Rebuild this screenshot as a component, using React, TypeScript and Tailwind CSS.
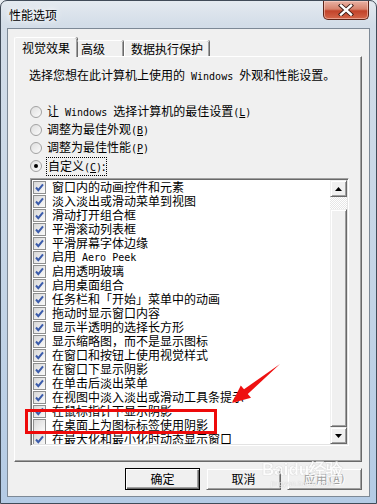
import React from 'react';
import clsx from 'clsx';

const effects: { label: string; checked: boolean }[] = [
  { label: '窗口内的动画控件和元素', checked: true },
  { label: '淡入淡出或滑动菜单到视图', checked: true },
  { label: '滑动打开组合框', checked: true },
  { label: '平滑滚动列表框', checked: true },
  { label: '平滑屏幕字体边缘', checked: true },
  { label: '启用 Aero Peek', checked: true },
  { label: '启用透明玻璃', checked: true },
  { label: '启用桌面组合', checked: true },
  { label: '任务栏和「开始」菜单中的动画', checked: true },
  { label: '拖动时显示窗口内容', checked: true },
  { label: '显示半透明的选择长方形', checked: true },
  { label: '显示缩略图，而不是显示图标', checked: true },
  { label: '在窗口和按钮上使用视觉样式', checked: true },
  { label: '在窗口下显示阴影', checked: true },
  { label: '在单击后淡出菜单', checked: true },
  { label: '在视图中淡入淡出或滑动工具条提示', checked: true },
  { label: '在鼠标指针下显示阴影', checked: true },
  { label: '在桌面上为图标标签使用阴影', checked: false },
  { label: '在最大化和最小化时动态显示窗口', checked: true },
];

const radios = [
  { label: '让 Windows 选择计算机的最佳设置', key: 'L' },
  { label: '调整为最佳外观', key: 'B' },
  { label: '调整为最佳性能', key: 'P' },
];

// latin runs are half-width in the original (SimSun), so put them in a mono font
function Mixed({ text }: { text: string }) {
  const parts = text.split(/( ?[A-Za-z]+(?: [A-Za-z]+)* ?)/);
  return (
    <>
      {parts.map((p, i) =>
        i % 2 === 1 ? (
          <span key={i} className="font-['DejaVu_Sans_Mono'] text-[10px] whitespace-pre">
            {p}
          </span>
        ) : (
          <span key={i}>{p}</span>
        )
      )}
    </>
  );
}

function Shortcut({ k }: { k: string }) {
  return (
    <span className="font-['DejaVu_Sans_Mono'] text-[10px]">
      (<span className="underline">{k}</span>)
    </span>
  );
}

function CheckBox({ checked }: { checked: boolean }) {
  return (
    <span className="w-[13px] h-[13px] shrink-0 border border-[#8e8f8f] bg-[linear-gradient(135deg,#d8d8d8,#fafafa)] flex items-center justify-center">
      {checked && (
        <svg width="11" height="11" viewBox="0 0 11 11">
          <path d="M2 5.5 L4.3 8.2 L9 2.3" fill="none" stroke="#3b5cab" strokeWidth="2" />
        </svg>
      )}
    </span>
  );
}

function Radio({ selected }: { selected?: boolean }) {
  return (
    <span className="w-[12px] h-[12px] shrink-0 rounded-full border border-[#a2a2a2] bg-[linear-gradient(135deg,#dedede,#fbfbfb)] flex items-center justify-center">
      {selected && <span className="w-[4px] h-[4px] rounded-full bg-black" />}
    </span>
  );
}

function Arrow({ up }: { up?: boolean }) {
  return (
    <svg width="7" height="4" viewBox="0 0 7 4">
      <path d={up ? 'M0 4 L3.5 0 L7 4 Z' : 'M0 0 L7 0 L3.5 4 Z'} fill="#000" />
    </svg>
  );
}

const raised =
  'border border-t-[#f0f0f0] border-l-[#f0f0f0] border-r-[#696969] border-b-[#696969] shadow-[inset_1px_1px_0_#fff,inset_-1px_-1px_0_#a0a0a0] bg-[#f0f0f0]';

export default function App() {
  return (
    <div className="w-[377px] h-[504px] relative overflow-hidden font-['Noto_Sans_CJK_SC',sans-serif] text-black bg-[#e8edf2]">
      {/* Aero frame */}
      <div className="w-full h-full flex flex-col rounded-t-[7px] border border-[#404b58] bg-[linear-gradient(180deg,#e4eaf0_0px,#d3dde8_24px,#c3d4e6_60%,#b4cbe5_100%)]">
        {/* Title bar */}
        <div className="h-[27px] flex items-start justify-between shrink-0">
          <span className="pl-[8px] pt-[6px] text-[12px] leading-[16px] [text-shadow:0_0_5px_#fff,0_0_8px_#fff]">
            性能选项
          </span>
          <div className="mr-[7px] w-[46px] h-[19px] rounded-b-[5px] border border-t-0 border-[#5e2519] bg-[linear-gradient(180deg,#e9b2a4_0%,#d7826c_45%,#c2432a_55%,#d4664a_100%)] shadow-[inset_0_0_0_1px_rgba(255,220,210,0.5)] flex items-center justify-center">
            <svg width="16" height="12" viewBox="0 0 16 12">
              <path d="M3 1.5 L13 10.5 M13 1.5 L3 10.5" stroke="#3a1a14" strokeWidth="4.2" strokeLinecap="square" />
              <path d="M3 1.5 L13 10.5 M13 1.5 L3 10.5" stroke="#fff" strokeWidth="2.4" strokeLinecap="square" />
            </svg>
          </div>
        </div>

        {/* Client area */}
        <div className="mx-[6px] h-[469px] shrink-0 border border-[#7d8996] bg-[#f0f0f0] flex flex-col pt-[8px] pl-[6px] pr-[7px] text-[12px] leading-[14px]">
          {/* Tabs */}
          <div className="flex items-end h-[19px] relative z-10">
            <div className="h-[20px] mb-[-1px] w-[63px] bg-[#f0f0f0] border-l border-t border-white rounded-t-[2px] shadow-[inset_-1px_0_0_#a0a0a0,1px_0_0_#696969] flex items-center pl-[7px]">
              视觉效果
            </div>
            <div className="h-[16px] w-[46px] border-t border-white rounded-t-[2px] shadow-[inset_-1px_0_0_#a0a0a0,1px_0_0_#696969] flex items-center pl-[4px] mt-auto">
              高级
            </div>
            <div className="h-[16px] w-[85px] ml-[1px] border-l border-t border-white rounded-t-[2px] shadow-[inset_-1px_0_0_#a0a0a0,1px_0_0_#696969] flex items-center pl-[6px]">
              数据执行保护
            </div>
          </div>

          {/* Tab panel */}
          <div className="h-[406px] border border-t-white border-l-white border-r-[#696969] border-b-[#696969] shadow-[inset_-1px_-1px_0_#a0a0a0] pl-[15px] pt-[10px] flex flex-col">
            <div className="h-[16px] leading-[16px] -ml-[1px]">
              <Mixed text="选择您想在此计算机上使用的 Windows 外观和性能设置。" />
            </div>

            <div className="mt-[20px] flex flex-col">
              {radios.map((r) => (
                <div key={r.key} className="h-[18px] flex items-center gap-[5px]">
                  <Radio />
                  <span>
                    <Mixed text={r.label} />
                    <Shortcut k={r.key} />
                  </span>
                </div>
              ))}
              <div className="h-[18px] flex items-center gap-[4px]">
                <Radio selected />
                <span className="border border-dotted border-black px-[1px] leading-[15px]">
                  自定义<Shortcut k="C" />:
                </span>
              </div>
            </div>

            {/* Effects list */}
            <div className="mt-[3px] w-[319px] h-[268px] border border-t-[#a0a0a0] border-l-[#a0a0a0] border-r-white border-b-white shadow-[inset_1px_1px_0_#696969,inset_-1px_-1px_0_#e3e3e3] bg-white p-[1px] flex overflow-hidden">
              <div className="flex-1 flex flex-col overflow-hidden">
                {effects.map((e) => (
                  <div key={e.label} className="h-[14px] shrink-0 flex items-center pl-[1px] gap-[6px] whitespace-nowrap">
                    <CheckBox checked={e.checked} />
                    <span>
                      <Mixed text={e.label} />
                    </span>
                  </div>
                ))}
              </div>
              <div className="w-[17px] flex flex-col shrink-0">
                <div className={clsx(raised, 'h-[17px] flex items-center justify-center')}>
                  <Arrow up />
                </div>
                <div className="h-[12px] bg-[repeating-conic-gradient(#ffffff_0_25%,#e6e6e6_0_50%)] bg-[length:2px_2px]" />
                <div className={clsx(raised, 'flex-1')} />
                <div className={clsx(raised, 'h-[17px] flex items-center justify-center')}>
                  <Arrow />
                </div>
              </div>
            </div>
          </div>

          {/* Buttons */}
          <div className="mt-[6px] flex justify-end gap-[6px]">
            <div className="w-[75px] h-[22px] border border-black bg-[#f0f0f0] shadow-[inset_1px_1px_0_#fff,inset_-1px_-1px_0_#696969,inset_-2px_-2px_0_#a0a0a0] flex items-center justify-center">
              确定
            </div>
            <div className={clsx(raised, 'w-[75px] h-[22px] flex items-center justify-center')}>
              取消
            </div>
            <div className={clsx(raised, 'w-[75px] h-[22px] flex items-center justify-center text-[#a0a0a0] [text-shadow:1px_1px_0_#fff]')}>
              应用<Shortcut k="A" />
            </div>
          </div>
        </div>
      </div>

      {/* Annotation: red box and arrow */}
      <div className="absolute left-[25px] top-[409px] w-[192px] h-[25px] border-[3px] border-[#ee0a0a]" />
      <svg className="absolute inset-0 pointer-events-none" width="377" height="504" viewBox="0 0 377 504">
        <polygon
          points="280,364 244,389.3 240.8,385.4 232,403 251,397.8 247.8,393.9"
          fill="#ee1111"
        />
      </svg>

      {/* Watermark */}
      <div className="absolute left-[262px] top-[461px] flex flex-col items-center pointer-events-none opacity-80">
        <span className="font-['Liberation_Sans'] font-bold text-[17px] leading-[18px] text-white [text-shadow:0_0_1px_#9a9a9a]">
          Baidu经验
        </span>
        <span className="font-['Liberation_Sans'] text-[8px] leading-[9px] text-white [text-shadow:0_0_1px_#9a9a9a]">
          jingyan.baidu.com
        </span>
      </div>
    </div>
  );
}
